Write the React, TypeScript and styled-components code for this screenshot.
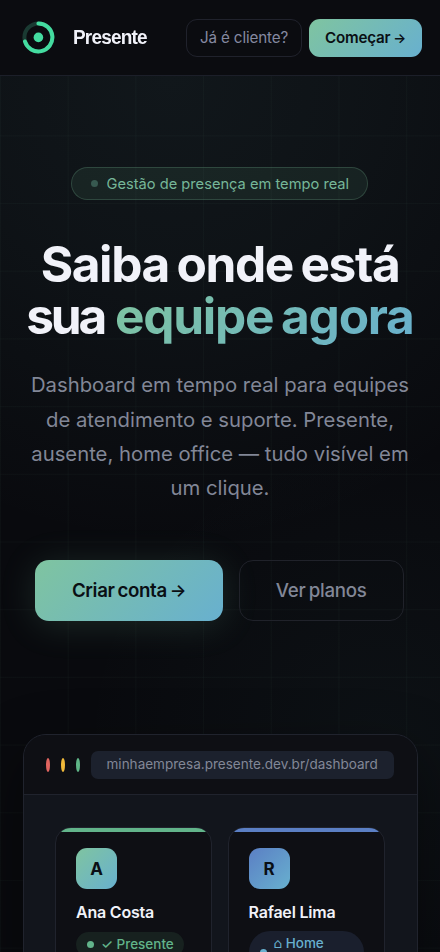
import React from "react";
import styled, { createGlobalStyle } from "styled-components";

const GlobalStyle = createGlobalStyle`
  * { box-sizing: border-box; }
  html, body { margin: 0; background: #090a0f; }
  body { font-family: Inter, "DejaVu Sans", sans-serif; color: #f1f2f9; height: 952px; overflow: hidden; }
`;

const gradient = "linear-gradient(135deg, #7fc4a0 0%, #68b0cf 100%)";

const Page = styled.div`
  width: 440px;
  height: 952px;
  overflow: hidden;
  background:
    linear-gradient(rgba(127, 196, 160, 0.035) 1px, transparent 1px) 0 0 / 67.69px 67.69px,
    linear-gradient(90deg, rgba(127, 196, 160, 0.035) 1px, transparent 1px) 0 0 / 67.69px 67.69px,
    radial-gradient(ellipse 460px 470px at 170px 76px, rgba(110, 176, 180, 0.08), rgba(110, 176, 180, 0.05) 45%, transparent 100%),
    radial-gradient(ellipse 300px 300px at 380px 740px, rgba(104, 190, 190, 0.04), transparent 100%),
    #090a0e;
`;

const Header = styled.header`
  height: 76px;
  display: flex;
  align-items: center;
  padding: 0 18px 0 22px;
  background: #0b0c10;
  border-bottom: 1px solid #1c1f29;
`;

const Brand = styled.div`
  display: flex;
  align-items: center;
  gap: 17.5px;
  flex: 1;
  svg { display: block; }
`;

const BrandName = styled.span`
  font: 700 20.9px/1 "Liberation Sans", Arial, sans-serif;
  letter-spacing: -0.9px;
  transform: scaleX(0.91);
  transform-origin: left center;
`;

const NavButton = styled.button<{ $primary?: boolean }>`
  height: 38px;
  width: ${(p) => (p.$primary ? 113 : 116)}px;
  margin-left: ${(p) => (p.$primary ? 7 : 0)}px;
  padding: 0;
  border-radius: 11px;
  border: ${(p) => (p.$primary ? "0" : "1px solid #20222c")};
  background: ${(p) => (p.$primary ? gradient : "transparent")};
  color: ${(p) => (p.$primary ? "#0a0f14" : "#8589a0")};
  font: ${(p) => (p.$primary ? 600 : 400)} 15.2px/1 Inter, sans-serif;
  letter-spacing: ${(p) => (p.$primary ? -0.22 : -0.13)}px;
  word-spacing: ${(p) => (p.$primary ? -0.5 : 0)}px;
  white-space: nowrap;
`;

const Arrow = styled.span<{ $size: number }>`
  font-size: ${(p) => p.$size}px;
`;

const Hero = styled.main`
  padding: 91px 23px 0;
  display: flex;
  flex-direction: column;
  align-items: center;
`;

const Badge = styled.div`
  display: flex;
  align-items: center;
  gap: 9px;
  width: 297px;
  height: 33px;
  margin-right: 1px;
  padding-left: 18.5px;
  border: 1px solid rgba(127, 196, 160, 0.22);
  border-radius: 17px;
  background: rgba(127, 196, 160, 0.09);
  color: #76b799;
  font-size: 14.66px;
  white-space: nowrap;
`;

const Dot = styled.i<{ $color: string }>`
  flex: none;
  width: 7px;
  height: 7px;
  border-radius: 50%;
  background: ${(p) => p.$color};
`;

const Title = styled.h1`
  margin: 38px -14px 0;
  font-weight: 700;
  font-size: 49.6px;
  line-height: 52.1px;
  white-space: nowrap;
  letter-spacing: -1.4px;
  word-spacing: -2.8px;
`;

const TitleLine = styled.span`
  display: flex;
  justify-content: center;
`;

const TitleWord = styled.span`
  letter-spacing: -3.3px;
  margin-right: 11px;
`;

const Accent = styled.span`
  margin-bottom: -10px;
  padding-bottom: 10px;
  letter-spacing: -1.25px;
  word-spacing: -2.8px;
  background: ${gradient};
  background-clip: text;
  -webkit-background-clip: text;
  color: transparent;
`;

const Lead = styled.p`
  margin: 26px 0 0;
  color: #828797;
  font-size: 20.3px;
  line-height: 34.4px;
  text-align: center;
  white-space: nowrap;
`;

const Actions = styled.div`
  display: flex;
  gap: 15.5px;
  margin: 54.4px 1px 0 0;
`;

const Action = styled.button<{ $primary?: boolean }>`
  width: ${(p) => (p.$primary ? 188 : 165.5)}px;
  height: 61px;
  padding: 1px 0 0;
  border-radius: 14px;
  border: ${(p) => (p.$primary ? "0" : "1px solid #20222a")};
  background: ${(p) => (p.$primary ? gradient : "transparent")};
  box-shadow: ${(p) => (p.$primary ? "0 4px 36px rgba(127, 196, 160, 0.16)" : "none")};
  color: ${(p) => (p.$primary ? "#0a0f14" : "#828797")};
  font: ${(p) => (p.$primary ? 600 : 500)} 18.7px/1 Inter, sans-serif;
  letter-spacing: ${(p) => (p.$primary ? -0.35 : -0.25)}px;
  word-spacing: -1.5px;
  white-space: nowrap;
`;

const Browser = styled.section`
  width: 395px;
  height: 400px;
  margin-top: 113px;
  border: 1px solid #20232d;
  border-radius: 23px;
  overflow: hidden;
  background: #12151c;
  box-shadow: 0 20px 60px rgba(0, 0, 0, 0.4);
`;

const BrowserBar = styled.div`
  height: 60px;
  display: flex;
  align-items: center;
  padding: 0 23px 0 22px;
  background: #0e0f14;
  border-bottom: 1px solid #20232d;
`;

const WindowDot = styled.i<{ $color: string }>`
  width: 4px;
  height: 14px;
  margin-right: 11px;
  border-radius: 50%;
  background: ${(p) => p.$color};
`;

const Address = styled.div`
  flex: 1;
  height: 28px;
  padding-left: 16px;
  border-radius: 7px;
  background: #1c212d;
  color: #828797;
  font-size: 13.54px;
  line-height: 27px;
  white-space: nowrap;
`;

const People = styled.div`
  display: grid;
  grid-template-columns: 157px 157px;
  gap: 15.5px;
  padding: 32px 31.5px;
`;

const Card = styled.article<{ $color: string }>`
  position: relative;
  height: 200px;
  padding: 20px 20px;
  overflow: hidden;
  border: 1px solid #20232d;
  border-radius: 16px;
  background: #0e0f14;
  &::before {
    content: "";
    position: absolute;
    inset: 0 0 auto;
    height: 3.4px;
    background: ${(p) => p.$color};
  }
`;

const Avatar = styled.div<{ $from: string }>`
  display: grid;
  place-items: center;
  width: 41px;
  height: 41px;
  border-radius: 11px;
  background: linear-gradient(135deg, ${(p) => p.$from}, #68b0cf);
  color: #0a0f14;
  font-size: 17px;
  font-weight: 700;
`;

const Name = styled.div`
  margin-top: 13px;
  font-size: 16px;
  line-height: 20px;
  font-weight: 600;
  letter-spacing: -0.2px;
  white-space: nowrap;
`;

const Status = styled.div<{ $blue?: boolean }>`
  display: flex;
  align-items: center;
  gap: 7px;
  width: ${(p) => (p.$blue ? 115 : 108)}px;
  height: ${(p) => (p.$blue ? 42 : 25)}px;
  margin-top: ${(p) => (p.$blue ? 9 : 10)}px;
  padding-left: 11px;
  border-radius: 21px;
  background: ${(p) => (p.$blue ? "#1a1f2d" : "#17211f")};
  color: ${(p) => (p.$blue ? "#68b0cf" : "#62b48a")};
  font-size: 13.5px;
  line-height: 17px;
  font-weight: 500;
`;

function Logo() {
  return (
    <svg width="33" height="33" viewBox="0 0 33 33" fill="none">
      <circle cx="16.4" cy="16.4" r="14" stroke="#1a3a32" strokeWidth="4" />
      <path d="M16.4 2.4a14 14 0 1 1-13.4 18.1" stroke="#44dca0" strokeWidth="4" strokeLinecap="round" />
      <circle cx="16.4" cy="16.4" r="4.8" fill="#44dca0" />
    </svg>
  );
}

export default function App() {
  return (
    <Page>
      <GlobalStyle />
      <Header>
        <Brand>
          <Logo />
          <BrandName>Presente</BrandName>
        </Brand>
        <NavButton>Já é cliente?</NavButton>
        <NavButton $primary>
          Começar <Arrow $size={13.5}>→</Arrow>
        </NavButton>
      </Header>
      <Hero>
        <Badge>
          <Dot $color="#375950" />
          Gestão de presença em tempo real
        </Badge>
        <Title>
          <TitleLine>Saiba onde está</TitleLine>
          <TitleLine>
            <TitleWord>sua</TitleWord>
            <Accent>equipe agora</Accent>
          </TitleLine>
        </Title>
        <Lead>
          Dashboard em tempo real para equipes
          <br />
          de atendimento e suporte. Presente,
          <br />
          ausente, home office — tudo visível em
          <br />
          um clique.
        </Lead>
        <Actions>
          <Action $primary>
            Criar conta <Arrow $size={17.5}>→</Arrow>
          </Action>
          <Action>Ver planos</Action>
        </Actions>
        <Browser>
          <BrowserBar>
            <WindowDot $color="#e0645f" />
            <WindowDot $color="#f0b93a" />
            <WindowDot $color="#5fb587" />
            <Address>minhaempresa.presente.dev.br/dashboard</Address>
          </BrowserBar>
          <People>
            <Card $color="#62b48a">
              <Avatar $from="#7fc4a0">A</Avatar>
              <Name>Ana Costa</Name>
              <Status>
                <Dot $color="#62b48a" />
                <span>✓ Presente</span>
              </Status>
            </Card>
            <Card $color="#5b7fc4">
              <Avatar $from="#5b7fc4">R</Avatar>
              <Name>Rafael Lima</Name>
              <Status $blue>
                <Dot $color="#68b0cf" />
                <span>
                  ⌂ Home
                  <br />
                  Office
                </span>
              </Status>
            </Card>
          </People>
        </Browser>
      </Hero>
    </Page>
  );
}
